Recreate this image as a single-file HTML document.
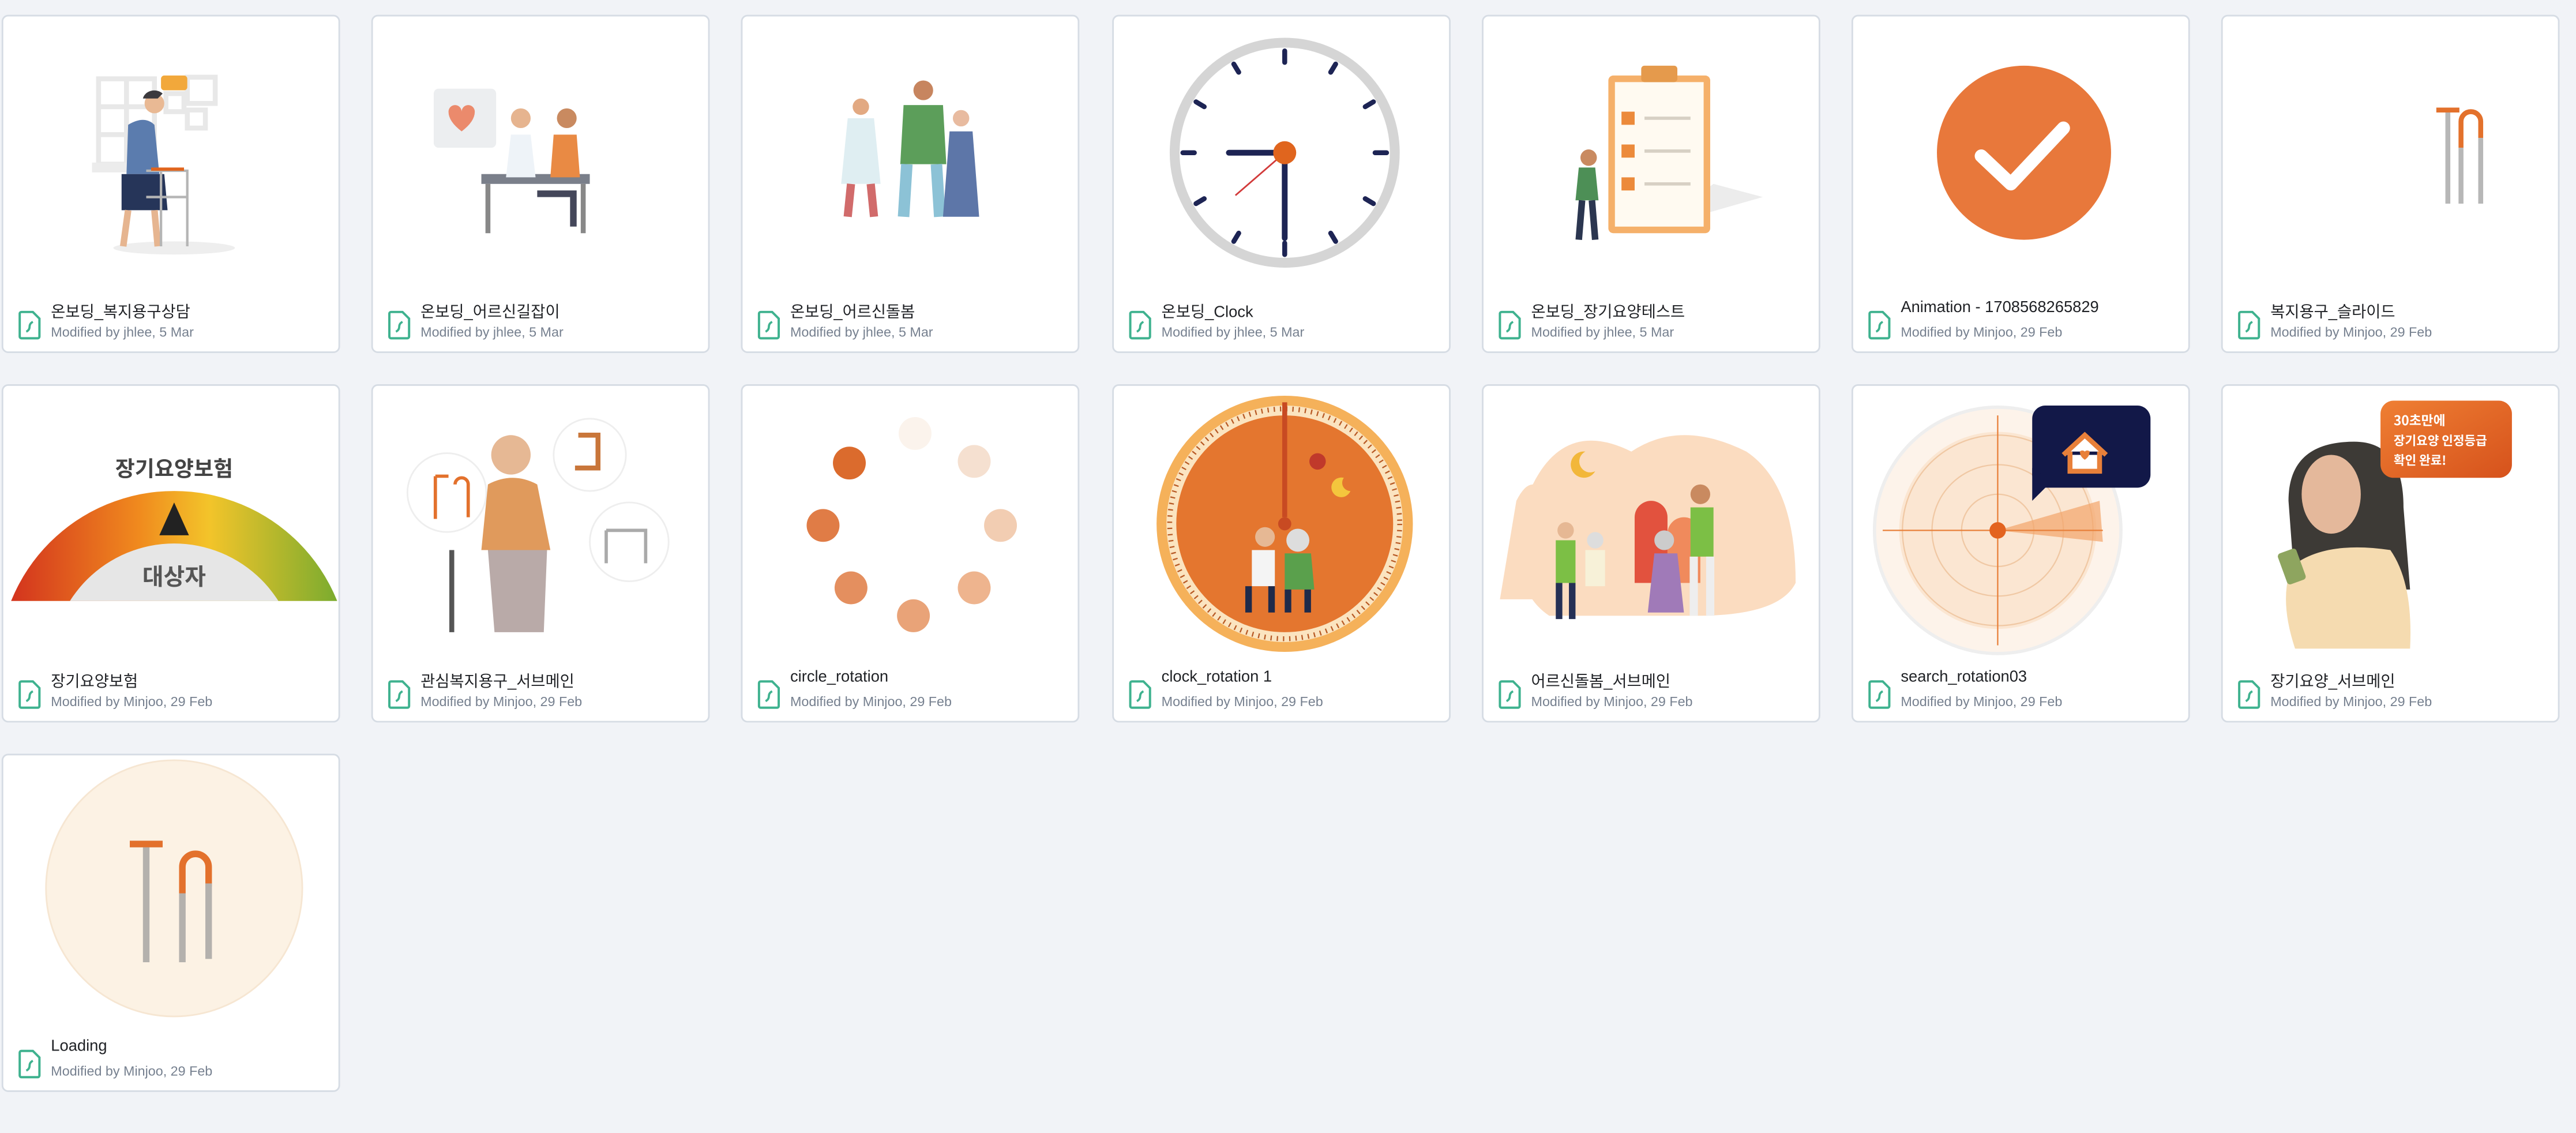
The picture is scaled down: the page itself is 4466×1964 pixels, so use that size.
<!DOCTYPE html>
<html><head><meta charset="utf-8">
<style>
html,body{margin:0;padding:0;background:#f1f3f7;overflow:hidden;width:4466px;height:1964px}
#w{position:absolute;left:0;top:0;width:1568px;height:690px;transform:scale(2.84821,2.8464);transform-origin:0 0;font-family:"Liberation Sans","Noto Sans CJK KR",sans-serif}
.c{position:absolute;width:206px;height:206px;background:#fff;border:1px solid #d6dce4;border-radius:4px;box-sizing:border-box;overflow:hidden}
.c svg.ill{position:absolute;left:0;top:0}
.t{position:absolute;left:29px;top:172px;font-size:9.6px;color:#1f2125;white-space:nowrap}
.m{position:absolute;left:29px;top:188px;font-size:8.2px;color:#76808f;white-space:nowrap}
.i{position:absolute;left:9px;top:179px}
</style></head><body><div id="w">

<!-- Row 1 -->
<div class="c" style="left:1px;top:9px">
<svg class="ill" width="206" height="170"><g fill="none" stroke="#e8e8e8" stroke-width="3"><rect x="58" y="38" width="34" height="52"/><path d="M75 38v52M58 55h34M58 72h34"/><rect x="112" y="37" width="17" height="16"/><rect x="99" y="47" width="11" height="11"/><rect x="112" y="57" width="11" height="11"/></g><rect x="54" y="89" width="40" height="6" fill="#ececec"/>
<rect x="96" y="36" width="16" height="9" rx="2" fill="#f2a83b"/><ellipse cx="104" cy="141" rx="37" ry="4" fill="#eee"/>
<circle cx="92" cy="53" r="6" fill="#e9b994"/><path d="M85 50a7 6 0 0 1 12-3l-3 3z" fill="#3c3a3e"/><path d="M76 66q10-6 16 0l3 30h-20z" fill="#5b7cae"/><path d="M72 96h26l2 22h-28z" fill="#263559"/><path d="M76 118l-3 22M92 118l2 22" stroke="#e6b590" stroke-width="4"/>
<path d="M87 94h25v46M96 94v46M87 110h25" stroke="#b5b5b5" stroke-width="1.5" fill="none"/><path d="M90 93h20" stroke="#e0651e" stroke-width="2"/></svg>
<svg class="i" width="14" height="18" viewBox="0 0 14 18"><path d="M2 1h7l4 4v11a1 1 0 0 1-1 1H2a1 1 0 0 1-1-1V2a1 1 0 0 1 1-1z" fill="none" stroke="#3fb28f" stroke-width="1.4"/><path d="M5 13q2-1 2-3t2-3" stroke="#3fb28f" stroke-width="1.3" fill="none"/></svg>
<div class="t">온보딩_복지용구상담</div><div class="m">Modified by jhlee, 5 Mar</div></div>

<div class="c" style="left:226px;top:9px">
<svg class="ill" width="206" height="170"><rect x="37" y="44" width="38" height="36" rx="3" fill="#eceef0"/><path d="M46 58a4 4 0 0 1 8 0a4 4 0 0 1 8 0q0 6-8 12q-8-6-8-12z" fill="#eb8a6c"/><rect x="66" y="96" width="66" height="6" fill="#7a7f8a"/><path d="M70 102v30M128 102v30" stroke="#888" stroke-width="3"/><circle cx="90" cy="62" r="6" fill="#e6b48f"/><path d="M84 72h12l3 26h-18z" fill="#eef3f8"/><circle cx="118" cy="62" r="6" fill="#c98a60"/><path d="M110 72h14l2 26h-18z" fill="#e98a44"/><path d="M100 108h22v20" stroke="#44475a" stroke-width="4" fill="none"/></svg>
<svg class="i" width="14" height="18" viewBox="0 0 14 18"><path d="M2 1h7l4 4v11a1 1 0 0 1-1 1H2a1 1 0 0 1-1-1V2a1 1 0 0 1 1-1z" fill="none" stroke="#3fb28f" stroke-width="1.4"/><path d="M5 13q2-1 2-3t2-3" stroke="#3fb28f" stroke-width="1.3" fill="none"/></svg>
<div class="t">온보딩_어르신길잡이</div><div class="m">Modified by jhlee, 5 Mar</div></div>

<div class="c" style="left:451px;top:9px">
<svg class="ill" width="206" height="170"><circle cx="72" cy="55" r="5" fill="#e2a982"/><path d="M64 62h16l4 40h-24z" fill="#dfeef2"/><path d="M66 102l-2 20M78 102l2 20" stroke="#d16b6b" stroke-width="5"/><circle cx="110" cy="45" r="6" fill="#c7855f"/><path d="M98 54h24l2 36h-28z" fill="#5c9e5a"/><path d="M100 90l-2 32M118 90l2 32" stroke="#8cc2d6" stroke-width="7"/><circle cx="133" cy="62" r="5" fill="#e8bba0"/><path d="M126 70h14l4 52h-22z" fill="#5d76a8"/></svg>
<svg class="i" width="14" height="18" viewBox="0 0 14 18"><path d="M2 1h7l4 4v11a1 1 0 0 1-1 1H2a1 1 0 0 1-1-1V2a1 1 0 0 1 1-1z" fill="none" stroke="#3fb28f" stroke-width="1.4"/><path d="M5 13q2-1 2-3t2-3" stroke="#3fb28f" stroke-width="1.3" fill="none"/></svg>
<div class="t">온보딩_어르신돌봄</div><div class="m">Modified by jhlee, 5 Mar</div></div>

<div class="c" style="left:677px;top:9px">
<svg class="ill" width="206" height="170"><circle cx="104" cy="83" r="67" fill="#fff" stroke="#d5d5d5" stroke-width="6"/>
<g stroke="#1d2454" stroke-width="3" stroke-linecap="round"><path d="M104 21v7M104 138v7M42 83h7M159 83h7M135 29l-3 5M76 132l-3 5M73 29l3 5M132 132l3 5M50 52l5 3M153 111l5 3M50 114l5-3M153 55l5-3"/><path d="M104 83v52" stroke-width="3.5"/><path d="M104 83h-34" stroke-width="3.5"/></g>
<path d="M104 83l-30 26" stroke="#d23a3a" stroke-width="1"/><circle cx="104" cy="83" r="7" fill="#e0651e"/></svg>
<svg class="i" width="14" height="18" viewBox="0 0 14 18"><path d="M2 1h7l4 4v11a1 1 0 0 1-1 1H2a1 1 0 0 1-1-1V2a1 1 0 0 1 1-1z" fill="none" stroke="#3fb28f" stroke-width="1.4"/><path d="M5 13q2-1 2-3t2-3" stroke="#3fb28f" stroke-width="1.3" fill="none"/></svg>
<div class="t">온보딩_Clock</div><div class="m">Modified by jhlee, 5 Mar</div></div>

<div class="c" style="left:902px;top:9px">
<svg class="ill" width="206" height="170"><path d="M100 130l70-20l-30-8z" fill="#ececec"/><rect x="76" y="36" width="62" height="96" rx="3" fill="#f5b06a"/><rect x="80" y="40" width="54" height="88" fill="#fffaf1"/><rect x="96" y="30" width="22" height="10" rx="2" fill="#e59a4c"/>
<g fill="#ec8a3b"><rect x="84" y="58" width="8" height="8"/><rect x="84" y="78" width="8" height="8"/><rect x="84" y="98" width="8" height="8"/></g><g stroke="#d7d0c4" stroke-width="2"><path d="M98 62h28M98 82h28M98 102h28"/></g>
<circle cx="64" cy="86" r="5" fill="#c98a60"/><path d="M58 92h10l2 20h-14z" fill="#4d8f56"/><path d="M60 112l-2 24M66 112l2 24" stroke="#2b3650" stroke-width="4"/></svg>
<svg class="i" width="14" height="18" viewBox="0 0 14 18"><path d="M2 1h7l4 4v11a1 1 0 0 1-1 1H2a1 1 0 0 1-1-1V2a1 1 0 0 1 1-1z" fill="none" stroke="#3fb28f" stroke-width="1.4"/><path d="M5 13q2-1 2-3t2-3" stroke="#3fb28f" stroke-width="1.3" fill="none"/></svg>
<div class="t">온보딩_장기요양테스트</div><div class="m">Modified by jhlee, 5 Mar</div></div>

<div class="c" style="left:1127px;top:9px">
<svg class="ill" width="206" height="170"><circle cx="104" cy="83" r="53" fill="#e8783b"/><path d="M78 85l18 17l32-34" stroke="#fff" stroke-width="8" fill="none" stroke-linecap="round" stroke-linejoin="round"/></svg>
<svg class="i" width="14" height="18" viewBox="0 0 14 18"><path d="M2 1h7l4 4v11a1 1 0 0 1-1 1H2a1 1 0 0 1-1-1V2a1 1 0 0 1 1-1z" fill="none" stroke="#3fb28f" stroke-width="1.4"/><path d="M5 13q2-1 2-3t2-3" stroke="#3fb28f" stroke-width="1.3" fill="none"/></svg>
<div class="t">Animation - 1708568265829</div><div class="m">Modified by Minjoo, 29 Feb</div></div>

<div class="c" style="left:1352px;top:9px">
<svg class="ill" width="206" height="170"><path d="M130 57h14M137 57v57" stroke="#b7b7b7" stroke-width="3"/><path d="M130 57h14" stroke="#e3712c" stroke-width="3"/><path d="M145 80v-16a6 6 0 0 1 12 0v10" stroke="#e3712c" stroke-width="3" fill="none"/><path d="M145 80v34M157 74v40" stroke="#b7b7b7" stroke-width="3"/></svg>
<svg class="i" width="14" height="18" viewBox="0 0 14 18"><path d="M2 1h7l4 4v11a1 1 0 0 1-1 1H2a1 1 0 0 1-1-1V2a1 1 0 0 1 1-1z" fill="none" stroke="#3fb28f" stroke-width="1.4"/><path d="M5 13q2-1 2-3t2-3" stroke="#3fb28f" stroke-width="1.3" fill="none"/></svg>
<div class="t">복지용구_슬라이드</div><div class="m">Modified by Minjoo, 29 Feb</div></div>

<!-- Row 2 -->
<div class="c" style="left:1px;top:234px">
<svg class="ill" width="206" height="170"><defs><linearGradient id="g1" x1="0" x2="1"><stop offset="0" stop-color="#d02b1e"/><stop offset=".4" stop-color="#f08a1e"/><stop offset=".6" stop-color="#f3c42a"/><stop offset="1" stop-color="#6fa92f"/></linearGradient></defs>
<clipPath id="cp"><rect x="0" y="0" width="206" height="131"/></clipPath>
<g clip-path="url(#cp)"><circle cx="104" cy="171" r="107" fill="url(#g1)"/><circle cx="104" cy="171" r="75" fill="#e6e6e6"/></g><path d="M104 71l-9 20h18z" fill="#222"/>
<text x="104" y="55" font-size="13" text-anchor="middle" fill="#444" font-family="Noto Sans CJK KR,sans-serif" font-weight="bold">장기요양보험</text><text x="104" y="121" font-size="14" text-anchor="middle" fill="#555" font-family="Noto Sans CJK KR,sans-serif" font-weight="bold">대상자</text></svg>
<svg class="i" width="14" height="18" viewBox="0 0 14 18"><path d="M2 1h7l4 4v11a1 1 0 0 1-1 1H2a1 1 0 0 1-1-1V2a1 1 0 0 1 1-1z" fill="none" stroke="#3fb28f" stroke-width="1.4"/><path d="M5 13q2-1 2-3t2-3" stroke="#3fb28f" stroke-width="1.3" fill="none"/></svg>
<div class="t">장기요양보험</div><div class="m">Modified by Minjoo, 29 Feb</div></div>

<div class="c" style="left:226px;top:234px">
<svg class="ill" width="206" height="170"><g fill="#fff" stroke="#eee"><circle cx="45" cy="65" r="24"/><circle cx="132" cy="42" r="22"/><circle cx="156" cy="95" r="24"/></g>
<path d="M38 55v26M38 55h8M50 60a4 4 0 0 1 8 0v20" stroke="#e3712c" stroke-width="2" fill="none"/><path d="M125 30h12v20h-14" stroke="#c9763a" stroke-width="3" fill="none"/><path d="M142 88h24v20M142 88v20" stroke="#aaa" stroke-width="2" fill="none"/>
<circle cx="84" cy="42" r="12" fill="#e6b894"/><path d="M70 60q15-8 30 0l8 40h-42z" fill="#e09a5c"/><path d="M70 100h36l-2 50h-30z" fill="#b9aaa8"/><path d="M48 100v50" stroke="#555" stroke-width="3"/></svg>
<svg class="i" width="14" height="18" viewBox="0 0 14 18"><path d="M2 1h7l4 4v11a1 1 0 0 1-1 1H2a1 1 0 0 1-1-1V2a1 1 0 0 1 1-1z" fill="none" stroke="#3fb28f" stroke-width="1.4"/><path d="M5 13q2-1 2-3t2-3" stroke="#3fb28f" stroke-width="1.3" fill="none"/></svg>
<div class="t">관심복지용구_서브메인</div><div class="m">Modified by Minjoo, 29 Feb</div></div>

<div class="c" style="left:451px;top:234px">
<svg class="ill" width="206" height="170"><circle cx="105" cy="29" r="10" fill="#fbf3ec"/><circle cx="141" cy="46" r="10" fill="#f5e0d0"/><circle cx="157" cy="85" r="10" fill="#f2cdb2"/><circle cx="141" cy="123" r="10" fill="#eeb48e"/><circle cx="104" cy="140" r="10" fill="#e9a378"/><circle cx="66" cy="123" r="10" fill="#e48f5f"/><circle cx="49" cy="85" r="10" fill="#e07c46"/><circle cx="65" cy="47" r="10" fill="#db6b2d"/></svg>
<svg class="i" width="14" height="18" viewBox="0 0 14 18"><path d="M2 1h7l4 4v11a1 1 0 0 1-1 1H2a1 1 0 0 1-1-1V2a1 1 0 0 1 1-1z" fill="none" stroke="#3fb28f" stroke-width="1.4"/><path d="M5 13q2-1 2-3t2-3" stroke="#3fb28f" stroke-width="1.3" fill="none"/></svg>
<div class="t">circle_rotation</div><div class="m">Modified by Minjoo, 29 Feb</div></div>

<div class="c" style="left:677px;top:234px">
<svg class="ill" width="206" height="170"><circle cx="104" cy="84" r="78" fill="#f5b15a"/><circle cx="104" cy="84" r="72" fill="#fbe4c0"/><circle cx="104" cy="84" r="66" fill="#e4762f"/><circle cx="104" cy="84" r="70" fill="none" stroke="#b85a25" stroke-width="3" stroke-dasharray="0.8 3"/>
<path d="M104 10v70" stroke="#c84a22" stroke-width="3"/><circle cx="104" cy="84" r="4" fill="#c84a22"/><circle cx="124" cy="46" r="5" fill="#c0392b"/><path d="M140 56a6 6 0 1 0 4 8a5 5 0 0 1-4-8z" fill="#f4c63d"/>
<circle cx="92" cy="92" r="6" fill="#e6b894"/><path d="M84 100h14v22h-14z" fill="#f4f4f4"/><circle cx="112" cy="94" r="7" fill="#ddd"/><path d="M104 102h16l2 22h-18z" fill="#5aa04c"/><path d="M82 122v16M96 122v16M106 124v14M118 124v14" stroke="#1e2a4a" stroke-width="4"/></svg>
<svg class="i" width="14" height="18" viewBox="0 0 14 18"><path d="M2 1h7l4 4v11a1 1 0 0 1-1 1H2a1 1 0 0 1-1-1V2a1 1 0 0 1 1-1z" fill="none" stroke="#3fb28f" stroke-width="1.4"/><path d="M5 13q2-1 2-3t2-3" stroke="#3fb28f" stroke-width="1.3" fill="none"/></svg>
<div class="t">clock_rotation 1</div><div class="m">Modified by Minjoo, 29 Feb</div></div>

<div class="c" style="left:902px;top:234px">
<svg class="ill" width="206" height="170"><path d="M30 60q20-40 60-20q30-20 70 0q30 20 30 80q-10 20-60 20h-90q-30-20-10-80z" fill="#fbdcc0"/><path d="M20 70q10-20 20 0v60h-30z" fill="#fbdcc0"/>
<path d="M62 40a8 8 0 1 0 6 12a6 6 0 0 1-6-12z" fill="#f2b73a"/><path d="M92 80a10 10 0 0 1 20 0v40h-20z" fill="#e2523e"/><path d="M112 90a10 10 0 0 1 20 0v30h-20z" fill="#f08a5c"/>
<circle cx="50" cy="88" r="5" fill="#e6b894"/><path d="M44 94h12v26h-12z" fill="#7cbf45"/><path d="M46 120v22M54 120v22" stroke="#253055" stroke-width="4"/>
<circle cx="68" cy="94" r="5" fill="#ddd"/><path d="M62 100h12v22h-12z" fill="#f7f1d8"/><circle cx="110" cy="94" r="6" fill="#ccc"/><path d="M104 102h14l4 36h-22z" fill="#a07ab8"/>
<circle cx="132" cy="66" r="6" fill="#c98a60"/><path d="M126 74h14v30h-14z" fill="#7cbf45"/><path d="M128 104v36M138 104v36" stroke="#eee" stroke-width="5"/></svg>
<svg class="i" width="14" height="18" viewBox="0 0 14 18"><path d="M2 1h7l4 4v11a1 1 0 0 1-1 1H2a1 1 0 0 1-1-1V2a1 1 0 0 1 1-1z" fill="none" stroke="#3fb28f" stroke-width="1.4"/><path d="M5 13q2-1 2-3t2-3" stroke="#3fb28f" stroke-width="1.3" fill="none"/></svg>
<div class="t">어르신돌봄_서브메인</div><div class="m">Modified by Minjoo, 29 Feb</div></div>

<div class="c" style="left:1127px;top:234px">
<svg class="ill" width="206" height="170"><circle cx="88" cy="88" r="75" fill="#fdf3ea" stroke="#eee" stroke-width="2"/><circle cx="88" cy="88" r="60" fill="#fbe6d2"/><g fill="none" stroke="#f0c8a4" stroke-width="0.8"><circle cx="88" cy="88" r="58"/><circle cx="88" cy="88" r="40"/><circle cx="88" cy="88" r="22"/></g>
<path d="M88 88L150 70L152 95z" fill="#f2a46a" opacity=".7"/><path d="M18 88h134M88 18v140" stroke="#e8803a" stroke-width="0.8"/><circle cx="88" cy="88" r="5" fill="#e3631f"/>
<rect x="109" y="12" width="72" height="50" rx="8" fill="#121848"/><path d="M109 50v20l12-12z" fill="#121848"/><path d="M132 40v12h18v-12M128 42l13-12l13 12" stroke="#e8803a" stroke-width="3" fill="#fff"/><path d="M138 40a2 2 0 0 1 3 0a2 2 0 0 1 3 0q0 3-3 5q-3-2-3-5z" fill="#e8803a"/></svg>
<svg class="i" width="14" height="18" viewBox="0 0 14 18"><path d="M2 1h7l4 4v11a1 1 0 0 1-1 1H2a1 1 0 0 1-1-1V2a1 1 0 0 1 1-1z" fill="none" stroke="#3fb28f" stroke-width="1.4"/><path d="M5 13q2-1 2-3t2-3" stroke="#3fb28f" stroke-width="1.3" fill="none"/></svg>
<div class="t">search_rotation03</div><div class="m">Modified by Minjoo, 29 Feb</div></div>

<div class="c" style="left:1352px;top:234px">
<svg class="ill" width="206" height="170"><defs><linearGradient id="g2" x1="0" y1="0" x2="1" y2="1"><stop offset="0" stop-color="#ef7f33"/><stop offset="1" stop-color="#d6521c"/></linearGradient></defs>
<path d="M40 70q0-36 40-36q30 0 30 40l4 50h-70z" fill="#3d3a36"/><ellipse cx="66" cy="66" rx="18" ry="24" fill="#e4b89b"/><path d="M42 110q20-16 60-10q14 20 12 60h-70q-10-30-2-50z" fill="#f5dbb0"/><rect x="36" y="100" width="12" height="20" rx="2" fill="#8ea55f" transform="rotate(-20 42 110)"/>
<rect x="96" y="9" width="80" height="47" rx="8" fill="url(#g2)"/>
<text x="104" y="24" font-size="8" fill="#fff" font-weight="bold" font-family="Noto Sans CJK KR,sans-serif">30초만에</text><text x="104" y="36" font-size="7.5" fill="#fff" font-weight="bold" font-family="Noto Sans CJK KR,sans-serif">장기요양 인정등급</text><text x="104" y="48" font-size="7.5" fill="#fff" font-weight="bold" font-family="Noto Sans CJK KR,sans-serif">확인 완료!</text></svg>
<svg class="i" width="14" height="18" viewBox="0 0 14 18"><path d="M2 1h7l4 4v11a1 1 0 0 1-1 1H2a1 1 0 0 1-1-1V2a1 1 0 0 1 1-1z" fill="none" stroke="#3fb28f" stroke-width="1.4"/><path d="M5 13q2-1 2-3t2-3" stroke="#3fb28f" stroke-width="1.3" fill="none"/></svg>
<div class="t">장기요양_서브메인</div><div class="m">Modified by Minjoo, 29 Feb</div></div>

<!-- Row 3 -->
<div class="c" style="left:1px;top:459px">
<svg class="ill" width="206" height="170"><circle cx="104" cy="81" r="78" fill="#fcf2e4" stroke="#f6e6d2" stroke-width="1"/><path d="M77 54h20M87 54v72" stroke="#b4b1ad" stroke-width="4"/><path d="M77 54h20" stroke="#e3712c" stroke-width="4"/><path d="M109 84v-16a8 8 0 0 1 16 0v12" stroke="#e3712c" stroke-width="4" fill="none"/><path d="M109 84v42M125 78v46" stroke="#b4b1ad" stroke-width="4"/></svg>
<svg class="i" width="14" height="18" viewBox="0 0 14 18"><path d="M2 1h7l4 4v11a1 1 0 0 1-1 1H2a1 1 0 0 1-1-1V2a1 1 0 0 1 1-1z" fill="none" stroke="#3fb28f" stroke-width="1.4"/><path d="M5 13q2-1 2-3t2-3" stroke="#3fb28f" stroke-width="1.3" fill="none"/></svg>
<div class="t">Loading</div><div class="m">Modified by Minjoo, 29 Feb</div></div>

</div></body></html>
